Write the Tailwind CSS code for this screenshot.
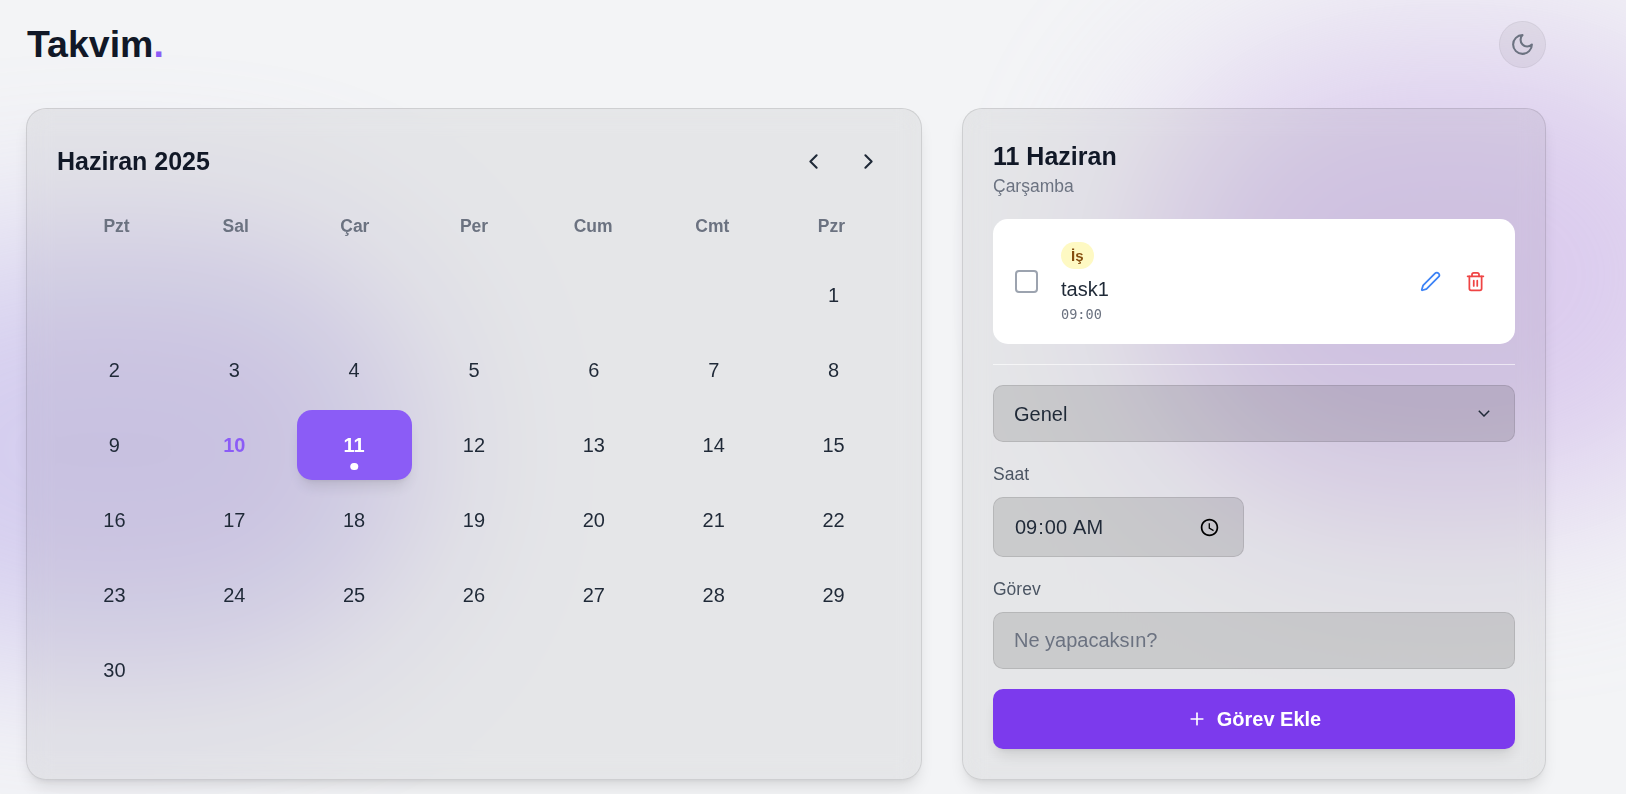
<!DOCTYPE html>
<html lang="en" class="text-[20px]">
<head>
<meta charset="utf-8">
<title>Takvim</title>
<script src="https://cdn.jsdelivr.net/npm/@tailwindcss/browser@4"></script>
</head>
<body class="relative h-[794px] overflow-hidden bg-[#f3f4f6] font-['Liberation_Sans',Arial,sans-serif] text-[#1f2937]">
<div class="absolute inset-0 overflow-hidden">
  <div class="absolute left-[-200px] top-[240px] h-[420px] w-[620px] rounded-full bg-[#a794e4] opacity-40 blur-[90px]"></div>
  <div class="absolute left-[1140px] top-[40px] h-[470px] w-[620px] rounded-full bg-[#c4a5e6] opacity-50 blur-[90px]"></div>
</div>

<div class="relative ml-[26px] w-[1520px] pt-[21px]">
  <header class="mb-8 flex items-center justify-between">
    <h1 class="pl-px text-3xl font-bold text-[#111827]">Takvim<span class="text-[#8b5cf6]">.</span></h1>
    <button class="rounded-full border border-black/5 bg-black/5 p-2 text-[#6b7280]">
      <svg class="h-5 w-5" viewBox="0 0 24 24" fill="none" stroke="currentColor" stroke-width="2" stroke-linecap="round" stroke-linejoin="round"><path d="M12 3a6 6 0 0 0 9 9 9 9 0 1 1-9-9Z"/></svg>
    </button>
  </header>

  <main class="flex gap-8">
    <section class="flex-1 rounded-2xl border border-black/10 bg-black/[.055] p-6 shadow-lg backdrop-blur-md">
      <div class="mb-6 flex items-center justify-between">
        <h2 class="text-xl font-bold text-[#111827]">Haziran 2025</h2>
        <div class="flex gap-2">
          <button class="p-2"><svg class="h-5 w-5" viewBox="0 0 24 24" fill="none" stroke="currentColor" stroke-width="2" stroke-linecap="round" stroke-linejoin="round"><path d="m15 18-6-6 6-6"/></svg></button>
          <button class="p-2"><svg class="h-5 w-5" viewBox="0 0 24 24" fill="none" stroke="currentColor" stroke-width="2" stroke-linecap="round" stroke-linejoin="round"><path d="m9 18 6-6-6-6"/></svg></button>
        </div>
      </div>
      <div class="mb-[21px] grid grid-cols-7 text-center text-sm font-bold text-[#6b7280]">
        <div>Pzt</div><div>Sal</div><div>Çar</div><div>Per</div><div>Cum</div><div>Cmt</div><div>Pzr</div>
      </div>
      <div class="grid grid-cols-7 gap-1 text-center">
        <div class="h-[70px]"></div><div class="h-[70px]"></div><div class="h-[70px]"></div><div class="h-[70px]"></div><div class="h-[70px]"></div><div class="h-[70px]"></div>
        <div class="flex h-[70px] items-center justify-center">1</div>
        <div class="flex h-[70px] items-center justify-center">2</div>
        <div class="flex h-[70px] items-center justify-center">3</div>
        <div class="flex h-[70px] items-center justify-center">4</div>
        <div class="flex h-[70px] items-center justify-center">5</div>
        <div class="flex h-[70px] items-center justify-center">6</div>
        <div class="flex h-[70px] items-center justify-center">7</div>
        <div class="flex h-[70px] items-center justify-center">8</div>
        <div class="flex h-[70px] items-center justify-center">9</div>
        <div class="flex h-[70px] items-center justify-center font-bold text-[#8b5cf6]">10</div>
        <div class="relative flex h-[70px] items-center justify-center rounded-xl bg-[#8b5cf6] font-bold text-white shadow-lg">11<span class="absolute bottom-2 left-1/2 h-1.5 w-1.5 -translate-x-1/2 rounded-full bg-white"></span></div>
        <div class="flex h-[70px] items-center justify-center">12</div>
        <div class="flex h-[70px] items-center justify-center">13</div>
        <div class="flex h-[70px] items-center justify-center">14</div>
        <div class="flex h-[70px] items-center justify-center">15</div>
        <div class="flex h-[70px] items-center justify-center">16</div>
        <div class="flex h-[70px] items-center justify-center">17</div>
        <div class="flex h-[70px] items-center justify-center">18</div>
        <div class="flex h-[70px] items-center justify-center">19</div>
        <div class="flex h-[70px] items-center justify-center">20</div>
        <div class="flex h-[70px] items-center justify-center">21</div>
        <div class="flex h-[70px] items-center justify-center">22</div>
        <div class="flex h-[70px] items-center justify-center">23</div>
        <div class="flex h-[70px] items-center justify-center">24</div>
        <div class="flex h-[70px] items-center justify-center">25</div>
        <div class="flex h-[70px] items-center justify-center">26</div>
        <div class="flex h-[70px] items-center justify-center">27</div>
        <div class="flex h-[70px] items-center justify-center">28</div>
        <div class="flex h-[70px] items-center justify-center">29</div>
        <div class="flex h-[70px] items-center justify-center">30</div>
      </div>
    </section>

    <aside class="w-[584px] rounded-2xl border border-black/10 bg-black/[.055] p-6 shadow-lg backdrop-blur-md">
      <h2 class="text-xl font-bold text-[#111827]">11 Haziran</h2>
      <p class="mb-4 text-sm text-[#6b7280]">Çarşamba</p>

      <div class="mb-4 flex items-center rounded-xl bg-white py-4 pl-[22px] pr-4">
        <span class="mr-[23px] h-[23px] w-[23px] rounded-[4px] border-[2.5px] border-[#9ca3af]"></span>
        <div class="flex-1">
          <div class="h-[35px] pt-[3px]"><span class="block h-[27px] w-fit rounded-full bg-[#fef9c3] px-2 text-xs font-bold leading-[27px] text-[#854d0e]">İş</span></div>
          <div class="text-base leading-[30px] text-[#1f2937]">task1</div>
          <div class="font-['DejaVu_Sans_Mono',monospace] text-[13.6px] leading-[20px] text-[#6b7280]">09:00</div>
        </div>
        <button class="p-[9.5px] text-[#3b82f6]"><svg class="h-[21px] w-[21px]" viewBox="0 0 24 24" fill="none" stroke="currentColor" stroke-width="2" stroke-linecap="round" stroke-linejoin="round"><path d="M21.174 6.812a1 1 0 0 0-3.986-3.987L3.842 16.174a2 2 0 0 0-.5.83l-1.321 4.352a.5.5 0 0 0 .623.622l4.353-1.32a2 2 0 0 0 .83-.497z"/></svg></button>
        <button class="ml-1 p-[9.5px] text-[#ef4444]"><svg class="h-[21px] w-[21px]" viewBox="0 0 24 24" fill="none" stroke="currentColor" stroke-width="2" stroke-linecap="round" stroke-linejoin="round"><path d="M3 6h18"/><path d="M19 6v14c0 1-1 2-2 2H7c-1 0-2-1-2-2V6"/><path d="M8 6V4c0-1 1-2 2-2h4c1 0 2 1 2 2v2"/><line x1="10" x2="10" y1="11" y2="17"/><line x1="14" x2="14" y1="11" y2="17"/></svg></button>
      </div>

      <div class="border-t border-white/60 pt-4">
        <div class="relative">
          <select class="block h-[57px] w-full appearance-none rounded-lg border border-black/10 bg-black/[.12] px-4 text-base text-[#1f2937]"><option>Genel</option></select>
          <svg class="absolute right-[25px] top-[25px] h-[7px] w-[12px]" viewBox="0 0 12 7" fill="none" stroke="#1f2937" stroke-width="1.5"><path d="M.8.8 6 6l5.2-5.2"/></svg>
        </div>
        <label class="mb-2 mt-4 block text-sm text-[#4b5563]">Saat</label>
        <input type="time" value="09:00" class="block h-[60px] w-[251px] rounded-lg border border-black/10 bg-black/[.12] px-4 text-base text-[#1f2937]">
        <label class="mb-2 mt-4 block text-sm text-[#4b5563]">Görev</label>
        <input type="text" placeholder="Ne yapacaksın?" class="block h-[57px] w-full rounded-lg border border-black/10 bg-black/[.12] px-4 text-base text-[#1f2937] placeholder:text-[#6b7280]">
        <button class="mt-4 flex h-[60px] w-full items-center justify-center gap-2 rounded-lg bg-[#7c3aed] text-base font-bold text-white shadow-lg">
          <svg class="h-[20px] w-[20px]" viewBox="0 0 24 24" fill="none" stroke="currentColor" stroke-width="2" stroke-linecap="round" stroke-linejoin="round"><path d="M5 12h14"/><path d="M12 5v14"/></svg>
          Görev Ekle
        </button>
      </div>
    </aside>
  </main>
</div>
</body>
</html>
